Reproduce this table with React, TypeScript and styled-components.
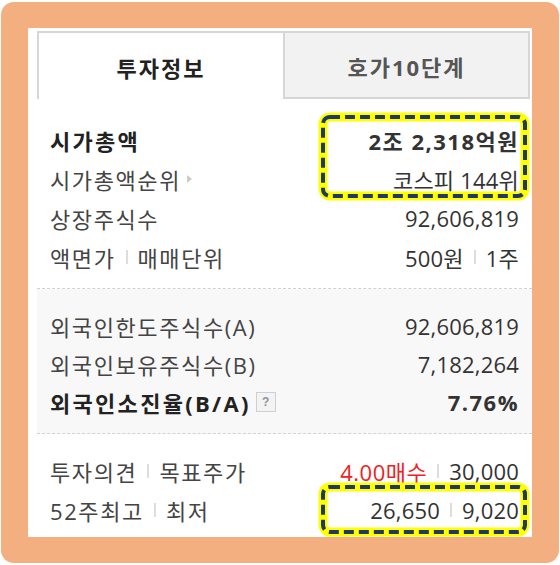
import React from "react";
import styled, { createGlobalStyle } from "styled-components";

const Global = createGlobalStyle`
  html, body { margin: 0; padding: 0; background: #ffffff; }
  body { font-family: "Open Sans", "Noto Sans CJK KR", sans-serif; }
`;

const Frame = styled.div`
  box-sizing: border-box;
  width: 558px;
  margin: 2px 1px 0;
  padding: 26px 27px;
  background: #f3af80;
  border-radius: 13px;
`;

const Panel = styled.div`
  position: relative;
  box-sizing: border-box;
  width: 504px;
  height: 509px;
  background: #ffffff;
  padding: 3px 0 8px 9px;
`;

const Tabs = styled.div`
  display: flex;
  width: 493px;
  height: 68px;
`;

const Tab = styled.div<{ $active?: boolean }>`
  box-sizing: border-box;
  display: flex;
  align-items: center;
  justify-content: center;
  flex: ${(p) => (p.$active ? "0 0 246px" : "1 1 auto")};
  border: 2px solid #d6d6d6;
  border-right: ${(p) => (p.$active ? "none" : "2px solid #d6d6d6")};
  border-bottom: ${(p) => (p.$active ? "none" : "2px solid #d6d6d6")};
  background: ${(p) => (p.$active ? "#ffffff" : "#f2f2f2")};
  color: ${(p) => (p.$active ? "#222222" : "#555555")};
  font-size: 22px;
  font-weight: 700;
  letter-spacing: 2px;
  padding-top: 2px;
`;

const Section = styled.div<{ $shade?: boolean; $top: number; $rowH: number; $last?: boolean }>`
  padding: ${(p) => p.$top}px 13px ${(p) => (p.$last ? 0 : 12)}px 13px;
  background: ${(p) => (p.$shade ? "#f8f8f8" : "transparent")};
  border-bottom: ${(p) => (p.$last ? "none" : "1px dashed #d2d2d2")};
  & > div { height: ${(p) => p.$rowH}px; }
`;

const Row = styled.div`
  display: flex;
  align-items: center;
  justify-content: space-between;
  font-size: 22px;
  white-space: nowrap;
`;

const Label = styled.span<{ $bold?: boolean }>`
  display: flex;
  align-items: center;
  color: ${(p) => (p.$bold ? "#222222" : "#444444")};
  font-weight: ${(p) => (p.$bold ? 700 : 400)};
  letter-spacing: ${(p) => (p.$bold ? "2.3px" : "1.6px")};
`;

const Value = styled.span<{ $bold?: boolean }>`
  display: flex;
  align-items: center;
  color: #333333;
  font-weight: ${(p) => (p.$bold ? 700 : 400)};
  letter-spacing: ${(p) => (p.$bold ? "1.5px" : "0.2px")};
`;

const Red = styled.span`
  color: #ee2222;
  letter-spacing: 0.5px;
`;

const Bar = styled.i`
  display: inline-block;
  width: 2px;
  height: 14px;
  background: #dddddd;
  margin: 0 10px;
`;

const Arrow = styled.i`
  display: inline-block;
  width: 0;
  height: 0;
  margin-left: 6px;
  border-top: 4px solid transparent;
  border-bottom: 4px solid transparent;
  border-left: 5px solid #cccccc;
`;

const Help = styled.span`
  box-sizing: border-box;
  display: inline-flex;
  align-items: center;
  justify-content: center;
  width: 20px;
  height: 20px;
  margin-left: 5px;
  border: 1px solid #cfcfcf;
  background: #f3f3f3;
  color: #8a93a0;
  font-family: "Liberation Sans", sans-serif;
  font-size: 12px;
  font-weight: 700;
  letter-spacing: 0;
`;

const Mark = styled.svg<{ $left: number; $top: number }>`
  position: absolute;
  left: ${(p) => p.$left}px;
  top: ${(p) => p.$top}px;
  overflow: visible;
  pointer-events: none;
`;

function Highlight({ left, top, w, h }: { left: number; top: number; w: number; h: number }) {
  return (
    <Mark $left={left} $top={top} width={w + 10} height={h + 10}>
      <rect x={5} y={5} width={w} height={h} rx={7} fill="none" stroke="#ffff00" strokeWidth={9} />
      <rect x={5} y={5} width={w} height={h} rx={7} fill="none" stroke="#1f3864" strokeWidth={4} strokeDasharray="10 5" />
    </Mark>
  );
}

export default function App() {
  return (
    <>
      <Global />
      <Frame>
        <Panel>
          <Tabs>
            <Tab $active>투자정보</Tab>
            <Tab>호가10단계</Tab>
          </Tabs>

          <Section $top={21} $rowH={39}>
            <Row>
              <Label $bold>시가총액</Label>
              <Value $bold>2조 2,318억원</Value>
            </Row>
            <Row>
              <Label>
                시가총액순위<Arrow />
              </Label>
              <Value>코스피 144위</Value>
            </Row>
            <Row>
              <Label>상장주식수</Label>
              <Value>92,606,819</Value>
            </Row>
            <Row>
              <Label>
                액면가<Bar />매매단위
              </Label>
              <Value>
                500원<Bar />1주
              </Value>
            </Row>
          </Section>

          <Section $shade $top={18} $rowH={38}>
            <Row>
              <Label>외국인한도주식수(A)</Label>
              <Value>92,606,819</Value>
            </Row>
            <Row>
              <Label>외국인보유주식수(B)</Label>
              <Value>7,182,264</Value>
            </Row>
            <Row>
              <Label $bold>
                외국인소진율(B/A)<Help>?</Help>
              </Label>
              <Value $bold>7.76%</Value>
            </Row>
          </Section>

          <Section $top={17} $rowH={39} $last>
            <Row>
              <Label>
                투자의견<Bar />목표주가
              </Label>
              <Value>
                <Red>4.00매수</Red>
                <Bar />
                30,000
              </Value>
            </Row>
            <Row>
              <Label>
                52주최고<Bar />최저
              </Label>
              <Value>
                26,650<Bar />9,020
              </Value>
            </Row>
          </Section>

          <Highlight left={290} top={84} w={202} h={79} />
          <Highlight left={290} top={454} w={202} h={45} />
        </Panel>
      </Frame>
    </>
  );
}
